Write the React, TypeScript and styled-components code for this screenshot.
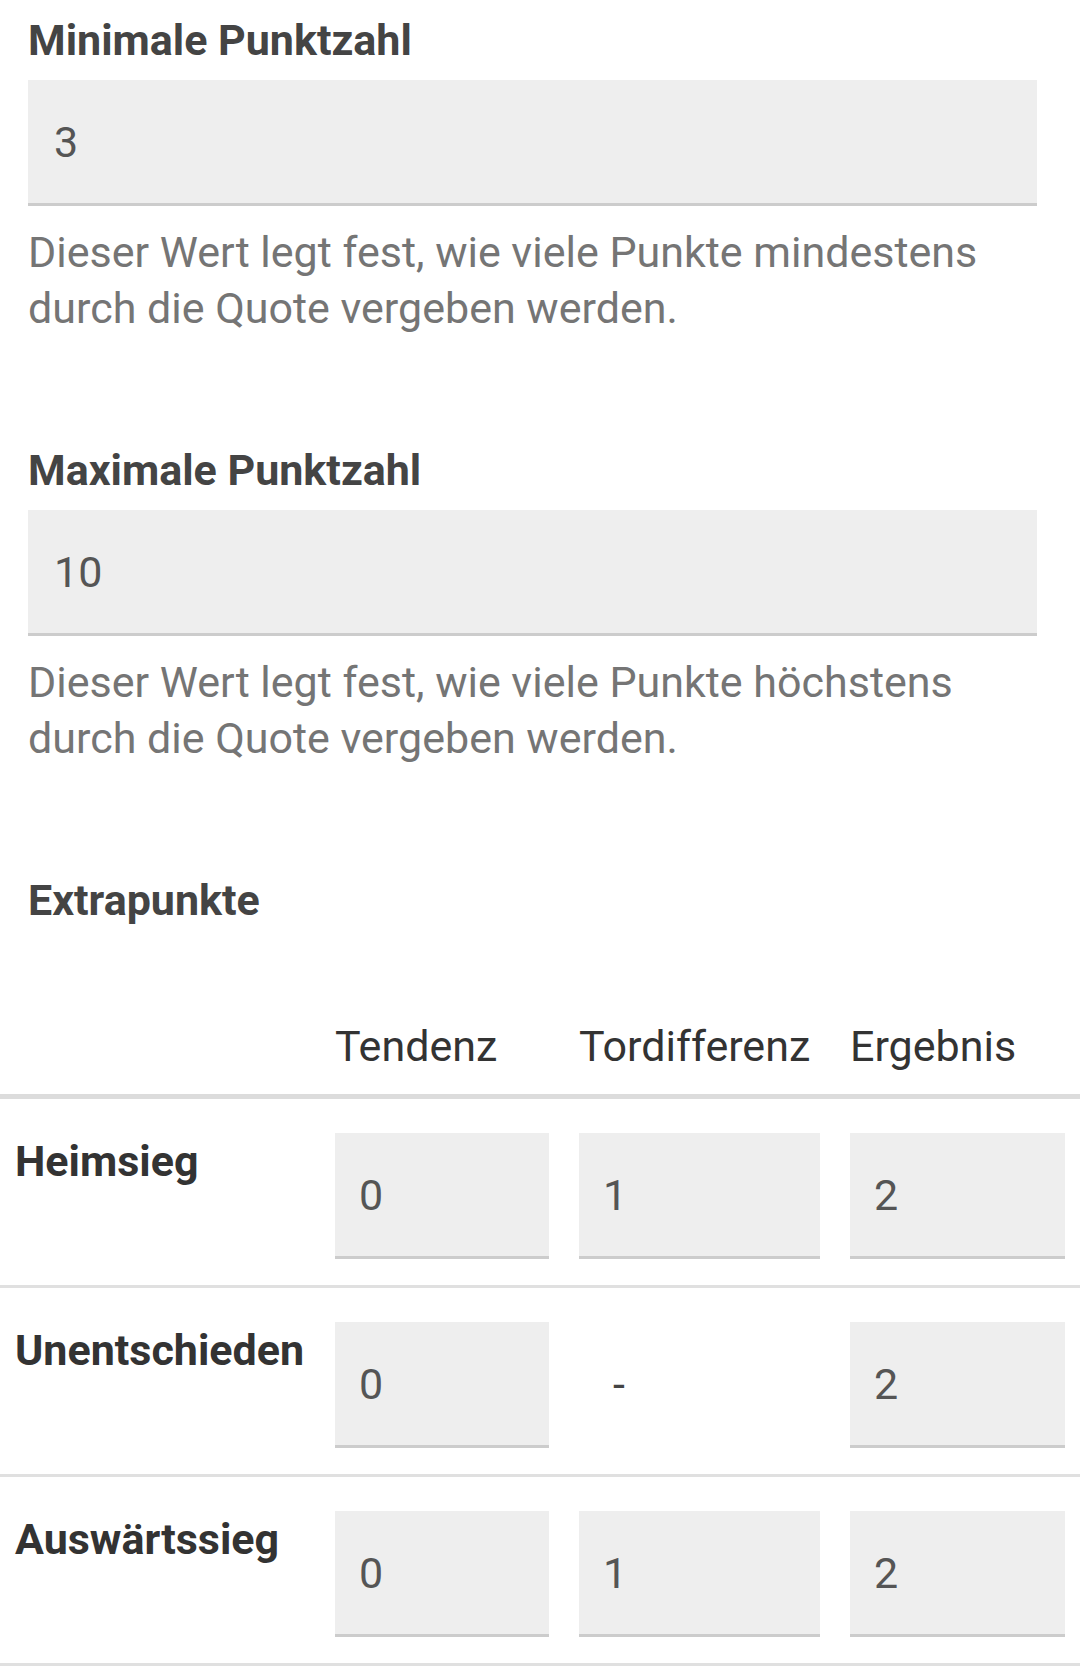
import React from "react";
import styled, { createGlobalStyle } from "styled-components";

const GlobalStyle = createGlobalStyle`
  html, body {
    margin: 0;
    padding: 0;
    background: #fff;
  }
  body {
    font-family: Roboto, "Noto Sans", "Liberation Sans", sans-serif;
    -webkit-font-smoothing: antialiased;
  }
`;

const Page = styled.div`
  width: 1080px;
  padding-top: 16px;
`;

const Section = styled.section`
  padding: 0 43px 0 28px;
  margin-bottom: 110px;

  &:last-of-type {
    margin-bottom: 78px;
  }
`;

const Heading = styled.h2`
  margin: 0;
  font-size: 43px;
  line-height: 48px;
  font-weight: 700;
  color: #444;
`;

const Field = styled.div`
  margin-top: 16px;
  height: 123px;
  background: #eee;
  border-bottom: 3px solid #ccc;
  display: flex;
  align-items: center;
  padding-left: 26px;
  font-size: 43px;
  color: #555;
`;

const Hint = styled.p`
  margin: 18px 0 0;
  font-size: 43px;
  line-height: 56px;
  color: #757575;
`;

const Table = styled.table`
  width: 1080px;
  border-collapse: collapse;
  table-layout: fixed;
`;

const HeadCell = styled.th`
  padding: 20px 15px 24px;
  font-size: 43px;
  line-height: 48px;
  font-weight: 400;
  color: #333;
  text-align: left;
  white-space: nowrap;
  border-bottom: 5px solid #dcdcdc;
`;

const Row = styled.tr`
  border-bottom: 3px solid #e0e0e0;
`;

const LabelCell = styled.td`
  padding: 34px 0 26px 15px;
  vertical-align: top;
  font-size: 43px;
  line-height: 56px;
  font-weight: 700;
  color: #333;
  white-space: nowrap;
`;

const ValueCell = styled.td`
  padding: 34px 15px 26px;
  vertical-align: top;
`;

const Box = styled.div<{ $plain?: boolean }>`
  height: 123px;
  display: flex;
  align-items: center;
  padding-left: ${(p) => (p.$plain ? "34px" : "24px")};
  font-size: 43px;
  color: ${(p) => (p.$plain ? "#444" : "#555")};
  background: ${(p) => (p.$plain ? "transparent" : "#eee")};
  border-bottom: 3px solid ${(p) => (p.$plain ? "transparent" : "#ccc")};
`;

const fields = [
  {
    title: "Minimale Punktzahl",
    value: "3",
    hint: "Dieser Wert legt fest, wie viele Punkte mindestens durch die Quote vergeben werden.",
  },
  {
    title: "Maximale Punktzahl",
    value: "10",
    hint: "Dieser Wert legt fest, wie viele Punkte höchstens durch die Quote vergeben werden.",
  },
];

const rows = [
  { label: "Heimsieg", values: ["0", "1", "2"] },
  { label: "Unentschieden", values: ["0", null, "2"] },
  { label: "Auswärtssieg", values: ["0", "1", "2"] },
];

export default function App() {
  return (
    <Page>
      <GlobalStyle />
      {fields.map((f) => (
        <Section key={f.title}>
          <Heading>{f.title}</Heading>
          <Field>{f.value}</Field>
          <Hint>{f.hint}</Hint>
        </Section>
      ))}
      <Section>
        <Heading>Extrapunkte</Heading>
      </Section>
      <Table>
        <colgroup>
          <col style={{ width: 320 }} />
          <col style={{ width: 244 }} />
          <col style={{ width: 271 }} />
          <col style={{ width: 245 }} />
        </colgroup>
        <thead>
          <tr>
            <HeadCell />
            <HeadCell>Tendenz</HeadCell>
            <HeadCell>Tordifferenz</HeadCell>
            <HeadCell>Ergebnis</HeadCell>
          </tr>
        </thead>
        <tbody>
          {rows.map((r) => (
            <Row key={r.label}>
              <LabelCell>{r.label}</LabelCell>
              {r.values.map((v, i) => (
                <ValueCell key={i}>
                  {v === null ? <Box $plain>-</Box> : <Box>{v}</Box>}
                </ValueCell>
              ))}
            </Row>
          ))}
        </tbody>
      </Table>
    </Page>
  );
}
